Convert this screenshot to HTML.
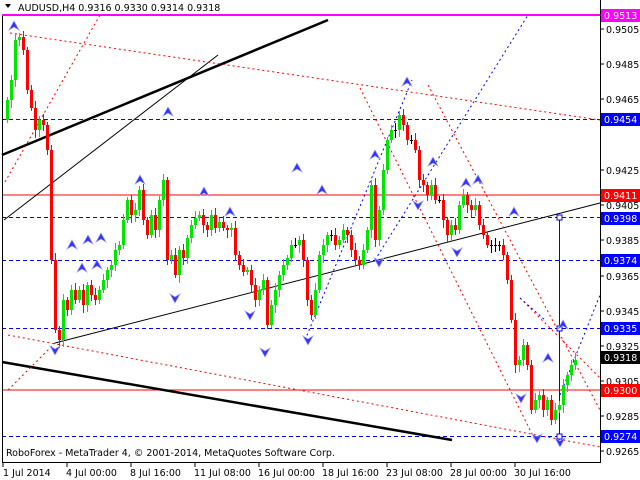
<!DOCTYPE html>
<html><head><meta charset="utf-8"><style>
html,body{margin:0;padding:0;background:#fff;width:640px;height:480px;overflow:hidden}
svg{display:block}
text{font-family:"DejaVu Sans","Liberation Sans",sans-serif;font-size:9.5px}
</style></head><body>
<svg id="s" width="640" height="480" viewBox="0 0 640 480" xmlns="http://www.w3.org/2000/svg">
<rect width="640" height="480" fill="#fff"/>
<g id="lines">
<line x1="2" y1="15" x2="600" y2="15" stroke="#ff00ff" stroke-width="2"/>
<line x1="2" y1="195" x2="600" y2="195" stroke="#f00" stroke-width="1"/>
<line x1="2" y1="390" x2="600" y2="390" stroke="#f00" stroke-width="1"/>
<g stroke="#0000ff" stroke-width="1" stroke-dasharray="4,3">
<line x1="2" y1="119.5" x2="600" y2="119.5"/>
<line x1="2" y1="217.5" x2="600" y2="217.5"/>
<line x1="2" y1="260.5" x2="600" y2="260.5"/>
<line x1="2" y1="328.5" x2="600" y2="328.5"/>
<line x1="2" y1="436.5" x2="600" y2="436.5"/>
</g>
<line x1="2" y1="155" x2="328" y2="20" stroke="#000" stroke-width="2.5"/>
<line x1="2" y1="362" x2="452" y2="440" stroke="#000" stroke-width="2.5"/>
<line x1="4" y1="220" x2="218" y2="55" stroke="#000" stroke-width="1"/>
<line x1="55" y1="343" x2="600" y2="203" stroke="#000" stroke-width="1"/>
<g stroke="#f00" stroke-width="1" stroke-dasharray="2,3" fill="none">
<line x1="10" y1="33" x2="600" y2="120"/>
<line x1="5" y1="182" x2="100" y2="15"/>
<line x1="8" y1="335" x2="600" y2="447"/>
<line x1="360" y1="88" x2="535" y2="440"/>
<line x1="428" y1="85" x2="600" y2="410"/>
<line x1="8" y1="390" x2="55" y2="343"/>
<line x1="520" y1="298" x2="600" y2="378"/>
</g>
<g stroke="#0000ff" stroke-width="1" stroke-dasharray="2,3" fill="none">
<line x1="305" y1="340" x2="412" y2="80"/>
<line x1="375" y1="260" x2="528" y2="15"/>
<line x1="560" y1="395" x2="600" y2="295"/>
<line x1="520" y1="298" x2="545" y2="320"/>
</g>
<line x1="559.5" y1="217" x2="559.5" y2="437" stroke="#0000ff" stroke-width="1"/>
<rect x="557" y="215" width="5" height="5" fill="#fff" stroke="#0000ff"/>
<rect x="557" y="326" width="5" height="5" fill="#fff" stroke="#0000ff"/>
<rect x="557" y="434" width="5" height="5" fill="#fff" stroke="#0000ff"/>
</g>
<g id="candles"></g>
<g id="arrows" fill="#3333ff" stroke="#9999ff" stroke-width="0.7"></g>
<line x1="2.5" y1="16" x2="2.5" y2="462" stroke="#000"/>
<line x1="2" y1="462.5" x2="600" y2="462.5" stroke="#000"/>
<line x1="600.5" y1="0" x2="600.5" y2="463" stroke="#000"/>
<path d="M5 4 L11 4 L8 8 Z" fill="#000"/>
<text x="18" y="11" font-size="10">AUDUSD,H4  0.9316 0.9330 0.9314 0.9318</text>
<text x="6" y="456" font-size="9.5">RoboForex - MetaTrader 4, © 2001-2014, MetaQuotes Software Corp.</text>
<g id="axis"></g>
</svg>
<script>
(function(){
var NS="http://www.w3.org/2000/svg";
function el(p,t,a,txt){var e=document.createElementNS(NS,t);for(var k in a)e.setAttribute(k,a[k]);if(txt)e.textContent=txt;p.appendChild(e);return e;}
var cs=[100,80,40,37,50,90,108,130,120,125,150,260,330,340,300,310,290,300,290,305,285,295,300,290,280,270,265,250,245,220,200,215,210,190,220,235,215,230,200,180,260,255,275,250,258,238,225,218,215,225,230,215,228,222,228,230,228,255,265,272,270,285,300,290,280,325,305,290,275,265,258,245,245,240,260,300,315,290,255,245,235,235,245,240,230,235,250,260,265,250,230,185,240,210,170,140,130,130,115,125,140,140,150,180,185,195,185,200,200,220,235,225,230,205,195,205,210,205,225,235,245,245,245,245,255,280,320,365,360,345,365,410,400,395,410,400,420,410,405,385,375,365,360];
var g=document.getElementById("candles");var pv=120;
for(var i=0;i<cs.length;i++){var x=6+i*4,o=pv,cl=cs[i];var bt=Math.min(o,cl),bb=Math.max(o,cl);
var col=cl<o?"#00e600":(cl>o?"#f00":"#000");var hi=bt-3-(i*7%5),lo=bb+3+(i*5%6);
el(g,"line",{x1:x+1.5,y1:hi,x2:x+1.5,y2:lo,stroke:col,"stroke-width":1});
el(g,"rect",{x:x,y:bt,width:3,height:Math.max(1,bb-bt),fill:col});pv=cl;}
var up=[[14,26],[168,112],[140,180],[204,192],[230,212],[82,268],[97,265],[297,168],[322,190],[407,82],[375,155],[433,162],[466,183],[478,180],[514,212],[548,358],[563,325],[72,245],[88,240],[101,238]];
var dn=[[55,350],[175,298],[265,352],[308,340],[250,315],[521,398],[560,442],[457,252],[418,205],[379,262],[537,438]];
var a=document.getElementById("arrows");
up.forEach(function(p){el(a,"path",{d:"M"+p[0]+" "+(p[1]-5)+" L"+(p[0]+5)+" "+(p[1]+4)+" L"+p[0]+" "+(p[1]+1)+" L"+(p[0]-5)+" "+(p[1]+4)+"Z"});});
dn.forEach(function(p){el(a,"path",{d:"M"+p[0]+" "+(p[1]+5)+" L"+(p[0]+5)+" "+(p[1]-4)+" L"+p[0]+" "+(p[1]-1)+" L"+(p[0]-5)+" "+(p[1]-4)+"Z"});});
var ax=document.getElementById("axis");
[["0.9505",29],["0.9485",64],["0.9465",99],["0.9425",170],["0.9405",205],["0.9385",240],["0.9365",276],["0.9345",311],["0.9325",346],["0.9305",381],["0.9285",416],["0.9265",451]].forEach(function(l){
el(ax,"line",{x1:600,y1:l[1],x2:604,y2:l[1],stroke:"#000"});el(ax,"text",{x:606,y:l[1]+4},l[0]);});
[["0.9513",15,"#ff00ff"],["0.9454",119,"#0000ff"],["0.9411",195,"#f00"],["0.9398",218,"#0000ff"],["0.9374",260,"#0000ff"],["0.9335",328,"#0000ff"],["0.9318",357,"#000"],["0.9300",390,"#f00"],["0.9274",436,"#0000ff"]].forEach(function(l){
el(ax,"rect",{x:601,y:l[1]-6,width:39,height:13,fill:l[2]});el(ax,"text",{x:604,y:l[1]+4,fill:"#fff"},l[0]);});
[["1 Jul 2014",3],["4 Jul 00:00",67],["8 Jul 16:00",131],["11 Jul 08:00",195],["16 Jul 00:00",259],["18 Jul 16:00",323],["23 Jul 08:00",387],["28 Jul 00:00",451],["30 Jul 16:00",515]].forEach(function(l){
el(ax,"line",{x1:l[1],y1:462,x2:l[1],y2:467,stroke:"#000"});el(ax,"text",{x:l[1]+(l[1]==3?0:-1),y:476},l[0]);});
})();
</script>
</body></html>
